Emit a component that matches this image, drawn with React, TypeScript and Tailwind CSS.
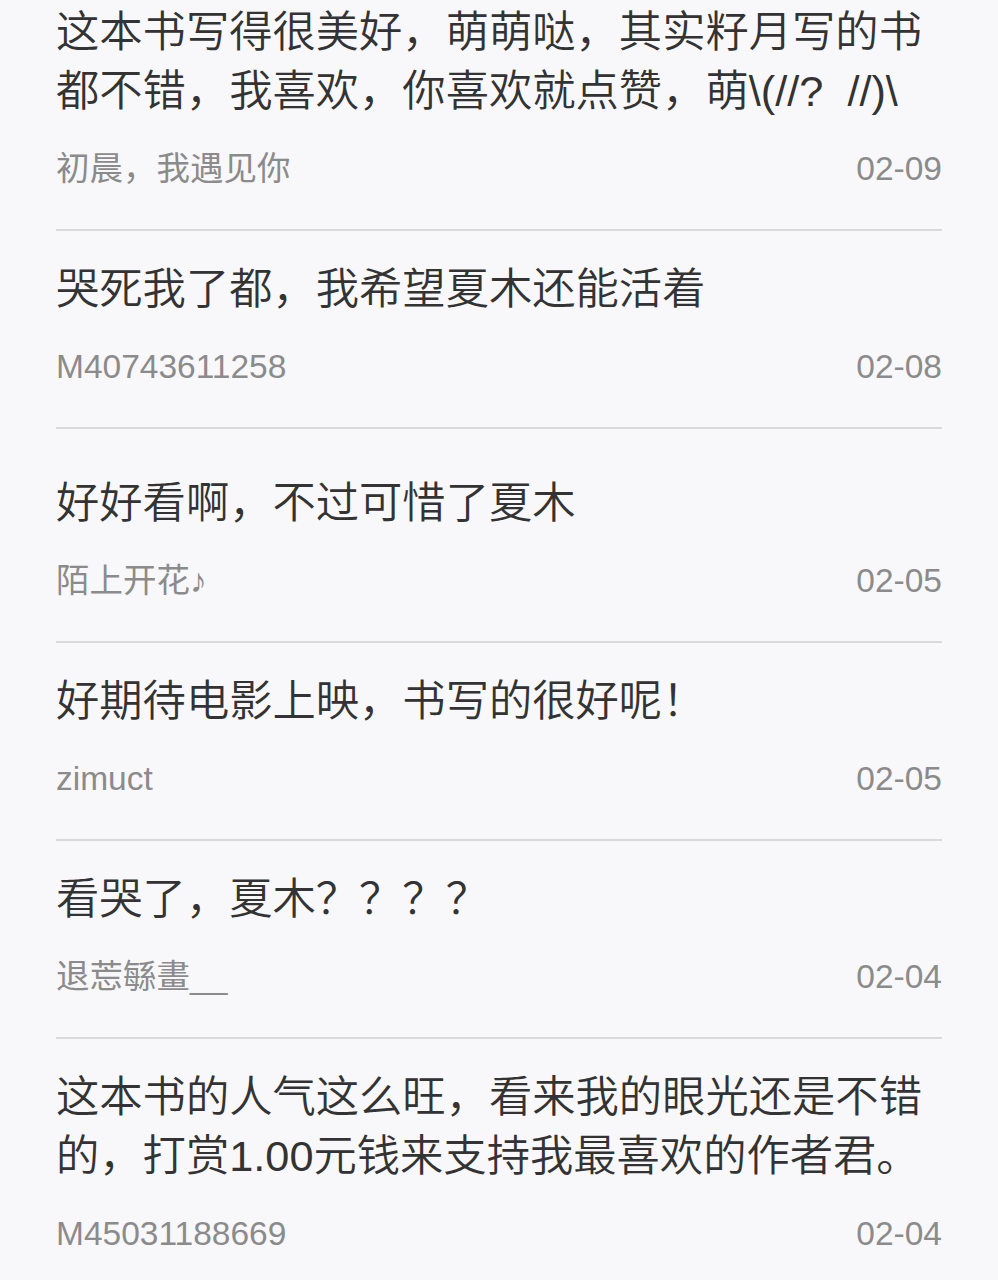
import React from "react";

interface IComment {
  content: string;
  name: string;
  date: string;
  top?: string;
}

const comments: IComment[] = [
  {
    content: "这本书写得很美好，萌萌哒，其实籽月写的书都不错，我喜欢，你喜欢就点赞，萌\\(//?  //)\\",
    name: "初晨，我遇见你",
    date: "02-09",
    top: "pt-[3px]",
  },
  { content: "哭死我了都，我希望夏木还能活着", name: "M40743611258", date: "02-08" },
  { content: "好好看啊，不过可惜了夏木", name: "陌上开花♪", date: "02-05", top: "pt-[45px]" },
  { content: "好期待电影上映，书写的很好呢！", name: "zimuct", date: "02-05" },
  { content: "看哭了，夏木？？？？", name: "退莣緐畫__", date: "02-04" },
  {
    content: "这本书的人气这么旺，看来我的眼光还是不错的，打赏1.00元钱来支持我最喜欢的作者君。",
    name: "M45031188669",
    date: "02-04",
  },
];

const CommentRow = ({ item, last }: { item: IComment; last: boolean }) => {
  return (
    <div
      className={`${item.top ?? "pt-[29px]"} pb-[38px] ${
        last ? "" : "border-b-2 border-[#d9d9db]"
      }`}
    >
      <p className="text-[43.3px] leading-[59px] font-[350] text-[#333333] whitespace-pre-wrap break-all">
        {item.content}
      </p>
      <div className="flex justify-between items-center mt-[26px] text-[33.5px] leading-[44px] text-[#8b8b8b]">
        <span>{item.name}</span>
        <span>{item.date}</span>
      </div>
    </div>
  );
};

const App = () => {
  return (
    <div
      className="min-h-screen w-full bg-[#f8f8fa] px-[56px]"
      style={{ fontFamily: '"Liberation Sans", "Noto Sans CJK SC", sans-serif' }}
    >
      {comments.map((c, i) => (
        <CommentRow key={i} item={c} last={i === comments.length - 1} />
      ))}
    </div>
  );
};

export default App;
